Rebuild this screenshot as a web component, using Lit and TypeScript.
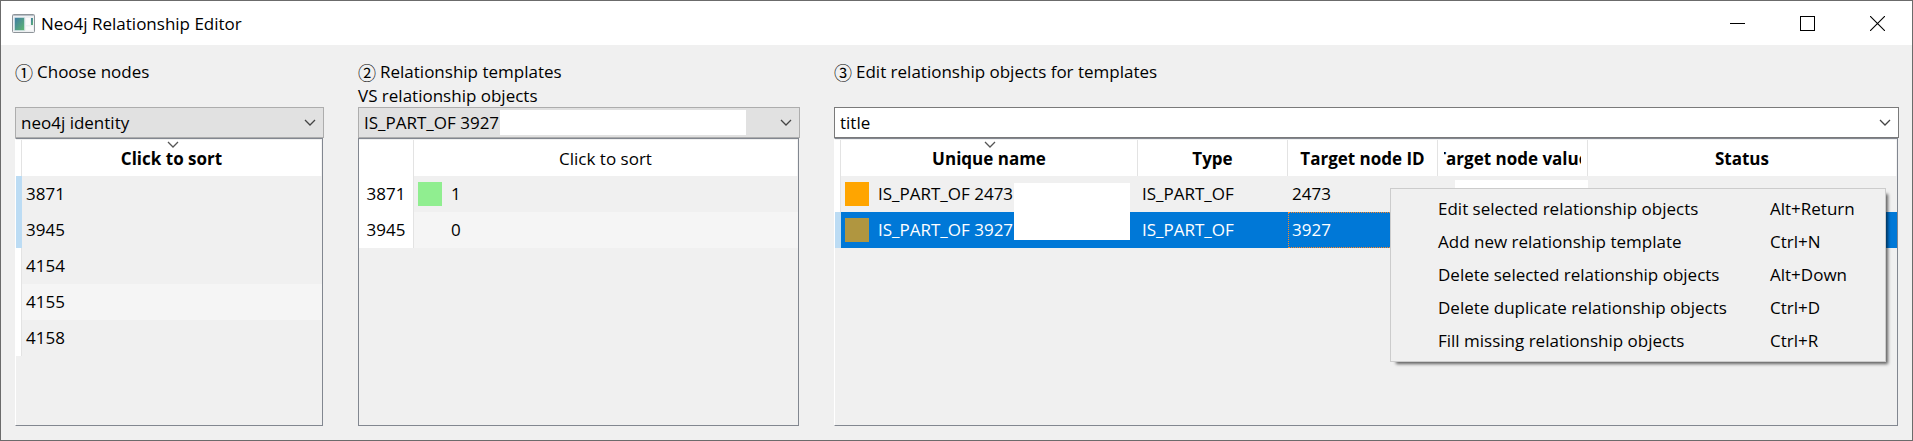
import { LitElement, html, css, svg, nothing } from "lit";
import { customElement, property } from "lit/decorators.js";
import { classMap } from "lit/directives/class-map.js";

const chevron = (cls: string) => html`<svg class=${cls} width="12" height="7" viewBox="0 0 12 7" aria-hidden="true">
  ${svg`<path d="M1 1l5 5 5-5" fill="none" stroke="currentColor" stroke-width="1.3" />`}
</svg>`;

interface Cell {
  text: string;
  swatch?: string;
  focused?: boolean;
}

interface Row {
  head: string;
  cells: Cell[];
  marked?: boolean;
  selected?: boolean;
}

interface Column {
  title: string;
  width?: number;
  sorted?: boolean;
}

@customElement("combo-box")
class ComboBox extends LitElement {
  @property() heading = "";
  @property() number = "";
  @property() second = "";
  @property() value = "";
  @property({ type: Boolean }) editable = false;
  @property({ type: Boolean }) covered = false;

  static styles = css`
    :host { display: block; }
    .label { display: block; box-sizing: border-box; height: 48px; padding-top: 1px; line-height: 24px; white-space: nowrap; }
    .line { display: flex; height: 24px; gap: 4px; }
    .number { font-family: "Noto Sans CJK JP", sans-serif; font-size: 18px; }
    .box { display: grid; align-items: center; color: #444; }
    .select {
      grid-area: 1 / 1; width: 100%; height: 31px; box-sizing: border-box; margin: 0;
      padding: 1px 30px 0 5px; appearance: none; border: 1px solid #adadad; border-radius: 0;
      background: #e1e1e1; font: inherit; color: #000;
    }
    .select.editable { background: #fff; border-color: #7a7a7a; }
    .arrow { grid-area: 1 / 1; justify-self: end; margin-right: 8px; pointer-events: none; }
    .cover { grid-area: 1 / 1; justify-self: start; width: 246px; height: 25px; margin-left: 142px; background: #fff; }
  `;

  render() {
    return html`
      <label class="label" for="choice">
        <span class="line"><span class="number">${this.number}</span><span>${this.heading}</span></span>
        ${this.second ? html`<span class="line">${this.second}</span>` : nothing}
      </label>
      <div class="box">
        <select id="choice" class=${classMap({ select: true, editable: this.editable })}>
          <option>${this.value}</option>
        </select>
        ${this.covered ? html`<span class="cover"></span>` : nothing}
        ${chevron("arrow")}
      </div>
    `;
  }
}

@customElement("data-grid")
class DataGrid extends LitElement {
  @property({ attribute: false }) columns: Column[] = [];
  @property({ attribute: false }) rows: Row[] = [];
  @property({ type: Number }) headWidth = 6;
  @property({ type: Boolean }) framed = false;

  static styles = css`
    :host {
      display: block; flex: 1; box-sizing: border-box; padding-top: 1px;
      border: 1px solid #828790; border-left-color: #fff;
    }
    :host([framed]) { border-left-color: #828790; }
    .table { width: 100%; border-collapse: separate; border-spacing: 0; table-layout: fixed; }
    .head, .corner {
      position: relative; height: 36px; padding: 1px 0 0; box-sizing: border-box; background: #fff;
      border-right: 1px solid #e3e3e3; font-weight: 400; white-space: nowrap; line-height: 24px;
    }
    .head:last-child { border-right-color: #f4f4f4; }
    .bold .head { font-weight: 700; }
    .title { display: flex; justify-content: center; overflow: hidden; margin: 0 6px; }
    .sort { position: absolute; top: 1px; left: 50%; margin-left: -5px; color: #555; }
    .side {
      height: 36px; padding: 0; box-sizing: border-box; background: #fff;
      border-right: 1px solid #e3e3e3; font-weight: 400;
    }
    .side.marked { background: #bcdcf4; border-right-color: #bcdcf4; }
    .cell { height: 36px; box-sizing: border-box; padding: 0 5px 0 4px; white-space: nowrap; line-height: 24px; }
    .content { display: flex; align-items: center; gap: 9px; }
    .swatch { width: 24px; height: 24px; }
    .stripe .cell { background: #f5f5f5; }
    .selected .cell { background: #0078d7; color: #fff; }
    .selected .focused { outline: 1px dotted #ff8728; outline-offset: -1px; }
  `;

  render() {
    const bold = !this.framed;
    return html`
      <table class="table">
        <colgroup>
          <col style="width:${this.headWidth}px" />
          ${this.columns.map((c) => (c.width ? html`<col style="width:${c.width}px" />` : html`<col />`))}
        </colgroup>
        <thead>
          <tr class=${classMap({ bold })}>
            <td class="corner"></td>
            ${this.columns.map(
              (c) => html`<th class="head" scope="col">
                ${c.sorted ? chevron("sort") : nothing}<span class="title">${c.title}</span>
              </th>`
            )}
          </tr>
        </thead>
        <tbody>
          ${this.rows.map(
            (r, i) => html`<tr class=${classMap({ stripe: i % 2 === 1 && !r.marked, selected: !!r.selected })}>
              <th class=${classMap({ side: true, marked: !!r.marked || !!r.selected })} scope="row">${r.head}</th>
              ${r.cells.map(
                (c) => html`<td class=${classMap({ cell: true, focused: !!c.focused })}>
                  <span class="content">
                    ${c.swatch ? html`<span class="swatch" style="background:${c.swatch}"></span>` : nothing}
                    <span>${c.text}</span>
                  </span>
                </td>`
              )}
            </tr>`
          )}
        </tbody>
      </table>
    `;
  }
}

@customElement("context-menu")
class ContextMenu extends LitElement {
  static styles = css`
    :host {
      display: block; box-sizing: border-box; width: 496px; padding: 3px 3px 4px; background: #f0f0f0;
      border: 1px solid #ccc; box-shadow: 4px 4px 3px -2px rgba(0, 0, 0, 0.6);
    }
    .item {
      display: grid; grid-template-columns: 332px 1fr; width: 100%; height: 33px; align-items: center;
      padding: 0 0 0 44px; border: 0; background: none; font: inherit; color: #000; text-align: left;
      white-space: nowrap;
    }
  `;

  private items = [
    ["Edit selected relationship objects", "Alt+Return"],
    ["Add new relationship template", "Ctrl+N"],
    ["Delete selected relationship objects", "Alt+Down"],
    ["Delete duplicate relationship objects", "Ctrl+D"],
    ["Fill missing relationship objects", "Ctrl+R"],
  ];

  render() {
    return html`<div role="menu">
      ${this.items.map(
        ([name, keys]) => html`<button class="item" role="menuitem"><span>${name}</span><span>${keys}</span></button>`
      )}
    </div>`;
  }
}

@customElement("app-root")
class AppRoot extends LitElement {
  static styles = css`
    :host {
      display: flex; flex-direction: column; box-sizing: border-box; min-height: 100vh;
      border: 1px solid #6b6b6b; background: #f0f0f0; color: #000;
      font-family: "Open Sans", "Noto Sans", sans-serif; font-size: 17px; line-height: 24px;
    }
    .titlebar { display: flex; align-items: center; height: 44px; padding-left: 11px; background: #fff; }
    .name { flex: 1; margin: 0 0 0 6px; padding-top: 1px; font-size: 17px; font-weight: 400; }
    .control {
      display: grid; place-items: center; width: 70px; height: 44px; padding: 0; border: 0;
      background: none; color: #000;
    }
    .panels {
      flex: 1; display: grid; grid-template-columns: 309fr 442fr 1065fr; gap: 34px;
      padding: 14px 13px 14px 14px;
    }
    .panel { position: relative; display: flex; flex-direction: column; min-width: 0; }
    .grid { margin-right: 1px; }
    .cover { position: absolute; background: #fff; }
    .names { left: 180px; top: 124px; width: 116px; height: 57px; }
    .values { left: 621px; top: 121px; width: 133px; height: 20px; }
    .menu { position: absolute; right: 13px; top: 129px; }
  `;

  render() {
    return html`
      <header class="titlebar">
        <svg width="23" height="19" viewBox="0 0 23 19" aria-hidden="true">
          <defs>
            <linearGradient id="screen" x1="0" y1="0" x2="1" y2="1">
              <stop offset="0" stop-color="#3f7aa5" />
              <stop offset="1" stop-color="#5fb86f" />
            </linearGradient>
          </defs>
          <rect x=".5" y=".5" width="22" height="18" rx="1" fill="#eef0f2" stroke="#8e9499" />
          <path d="M1 1.5h21" stroke="#b9c0c8" />
          <rect x="2.5" y="3.5" width="10" height="13" fill="url(#screen)" stroke="#d9e6ee" stroke-width=".6" />
          <path d="M14 4h4v7h-4zM14 12.500h7v4h-7z" fill="#fafafa" />
          <rect x="19" y="4" width="2" height="7" fill="url(#screen)" />
        </svg>
        <h1 class="name">Neo4j Relationship Editor</h1>
        <button class="control" aria-label="Minimize">
          <svg width="15" height="15" viewBox="0 0 15 15"><path d="M0 7.500h15" stroke="currentColor" /></svg>
        </button>
        <button class="control" aria-label="Maximize">
          <svg width="15" height="15" viewBox="0 0 15 15">
            <rect x=".5" y=".5" width="14" height="14" fill="none" stroke="currentColor" />
          </svg>
        </button>
        <button class="control" aria-label="Close">
          <svg width="15" height="15" viewBox="0 0 15 15">
            <path d="M0 0l15 15M15 0L0 15" stroke="currentColor" stroke-width="1.1" />
          </svg>
        </button>
      </header>
      <main class="panels">
        <section class="panel">
          <combo-box number="①" heading="Choose nodes" value="neo4j identity"></combo-box>
          <data-grid
            class="grid"
            .columns=${[{ title: "Click to sort", sorted: true }]}
            .rows=${[
              { head: "", marked: true, cells: [{ text: "3871" }] },
              { head: "", marked: true, cells: [{ text: "3945" }] },
              { head: "", cells: [{ text: "4154" }] },
              { head: "", cells: [{ text: "4155" }] },
              { head: "", cells: [{ text: "4158" }] },
            ]}
          ></data-grid>
        </section>
        <section class="panel">
          <combo-box
            number="②"
            heading="Relationship templates"
            second="VS relationship objects"
            value="IS_PART_OF 3927"
            covered
          ></combo-box>
          <data-grid
            class="grid"
            framed
            .headWidth=${55}
            .columns=${[{ title: "Click to sort" }]}
            .rows=${[
              { head: "3871", cells: [{ text: "1", swatch: "#90ee90" }] },
              { head: "3945", cells: [{ text: "0", swatch: "transparent" }] },
            ]}
          ></data-grid>
        </section>
        <section class="panel">
          <combo-box number="③" heading="Edit relationship objects for templates" value="title" editable></combo-box>
          <data-grid
            class="grid"
            .columns=${[
              { title: "Unique name", width: 297, sorted: true },
              { title: "Type", width: 150 },
              { title: "Target node ID", width: 150 },
              { title: "Target node value", width: 150 },
              { title: "Status" },
            ]}
            .rows=${[
              {
                head: "",
                cells: [
                  { text: "IS_PART_OF 2473", swatch: "#ffa500" },
                  { text: "IS_PART_OF" },
                  { text: "2473" },
                  { text: "" },
                  { text: "" },
                ],
              },
              {
                head: "",
                selected: true,
                cells: [
                  { text: "IS_PART_OF 3927", swatch: "#b09640" },
                  { text: "IS_PART_OF" },
                  { text: "3927", focused: true },
                  { text: "" },
                  { text: "" },
                ],
              },
            ]}
          ></data-grid>
          <span class="cover names"></span>
          <span class="cover values"></span>
          <context-menu class="menu"></context-menu>
        </section>
      </main>
    `;
  }
}
